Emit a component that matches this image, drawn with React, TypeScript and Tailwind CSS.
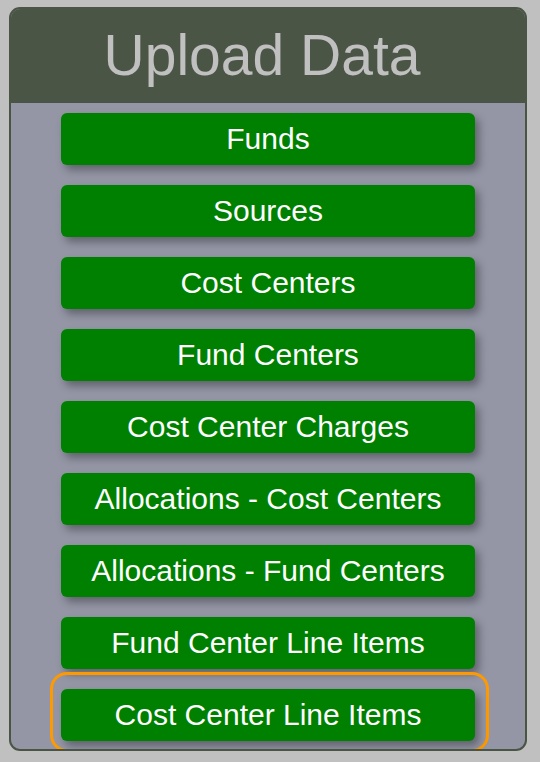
const items = [
  "Funds",
  "Sources",
  "Cost Centers",
  "Fund Centers",
  "Cost Center Charges",
  "Allocations - Cost Centers",
  "Allocations - Fund Centers",
  "Fund Center Line Items",
  "Cost Center Line Items",
]

export default function App() {
  return (
    <div className="min-h-[762px] w-[540px] bg-[#c0c0c0] pt-[7px] pl-[9px] font-['Liberation_Sans',Arial,sans-serif]">
      <div className="w-[518px] h-[744px] rounded-[11px] border-2 border-[#4b5545] bg-[#9496a6] overflow-hidden">
        <div className="h-[94px] bg-[#4b5545] flex items-center justify-center pr-[12px]">
          <h1 className="text-[57px] leading-none text-[#c0c0c0] mt-[-2px]">Upload Data</h1>
        </div>
        <div className="flex flex-col items-center gap-5 pt-[10px]">
          {items.map((label, i) => (
            <div key={label} className="relative">
              {i === items.length - 1 && (
                <div className="absolute -left-[11px] -right-[14px] -top-[17px] -bottom-[11px] rounded-[17px] border-[3px] border-[#ff9900]" />
              )}
              <button className="relative w-[414px] h-[52px] rounded-[6px] bg-[#008000] text-white text-[30px] leading-none flex items-center justify-center shadow-[4px_5px_9px_rgba(0,0,0,0.35)]">
                {label}
              </button>
            </div>
          ))}
        </div>
      </div>
    </div>
  )
}
